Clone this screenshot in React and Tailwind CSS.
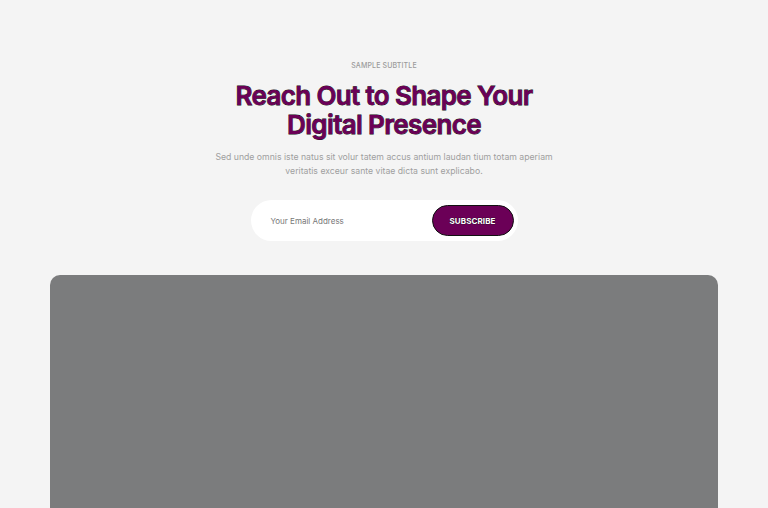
export default function App() {
  return (
    <div className="min-h-[508px] h-[508px] overflow-hidden bg-[#f4f4f4] flex flex-col items-center" style={{ fontFamily: "Inter, 'Noto Sans', sans-serif" }}>
      <div className="pt-[61px] text-[7px] leading-[9px] tracking-[0.02em] uppercase text-[#9a9a9a] font-medium">Sample Subtitle</div>
      <h1 className="mt-[11px] text-center text-[26px] leading-[29px] font-semibold tracking-[-0.025em] text-[#6b0057] [-webkit-text-stroke:0.8px_#111] [paint-order:stroke_fill]">
        Reach Out to Shape Your<br />Digital Presence
      </h1>
      <p className="mt-[11px] text-center text-[8.7px] leading-[14px] text-[#9f9f9f]">
        Sed unde omnis iste natus sit volur tatem accus antium laudan tium totam aperiam<br />
        veritatis exceur sante vitae dicta sunt explicabo.
      </p>
      <div className="mt-[22px] w-[267px] h-[41px] bg-white rounded-full flex items-center justify-between pl-[20px] pr-[4px]">
        <span className="text-[8px] text-[#777]">Your Email Address</span>
        <button className="w-[82px] h-[31px] rounded-full bg-[#6b0057] border border-[#111] text-white text-[8px] font-bold uppercase tracking-[0.01em] [-webkit-text-stroke:0.6px_#111] [paint-order:stroke_fill]">Subscribe</button>
      </div>
      <div className="mt-[34px] w-[668px] flex-1 bg-[#7b7c7d] rounded-t-[10px]"></div>
    </div>
  );
}
